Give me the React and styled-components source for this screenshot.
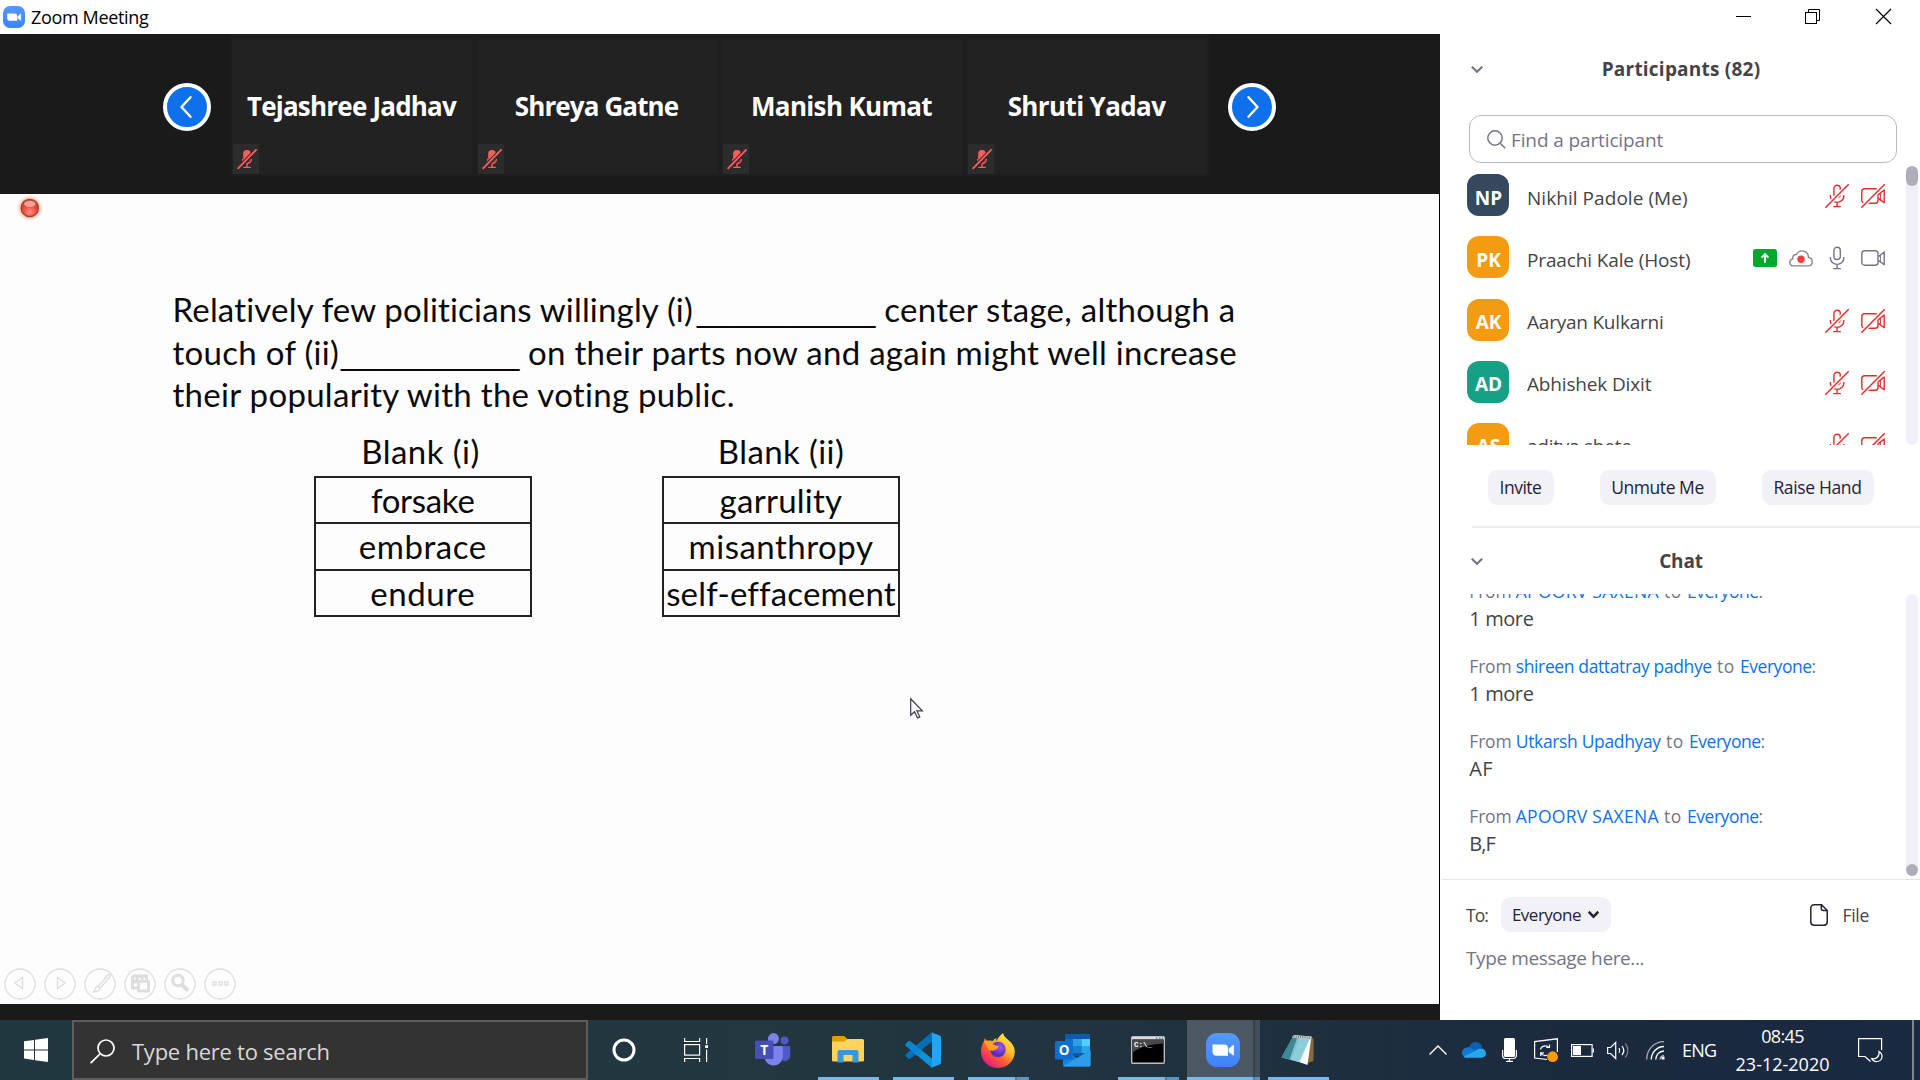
import React from "react";
import styled, { createGlobalStyle } from "styled-components";

const UI = `"Open Sans", "Noto Sans", sans-serif`;
const SLIDE = `Lato, "Open Sans", sans-serif`;

const GlobalStyle = createGlobalStyle`
  * { box-sizing: border-box; }
  html, body { margin: 0; padding: 0; overflow: hidden; }
  body { font-family: ${UI}; background: #fff; }
  svg { display: block; flex: none; overflow: visible; }
`;

const Screen = styled.div`
  width: 1920px;
  height: 1080px;
  display: flex;
  flex-direction: column;
  overflow: hidden;
`;

const Label = styled.span`
  white-space: pre;
  font-size: ${(p) => p.$size || 18}px;
  font-weight: ${(p) => (p.$bold ? 700 : 400)};
  letter-spacing: ${(p) => p.$ls || 0}px;
  color: ${(p) => p.$color || "#444446"};
`;

/* ---------- title bar ---------- */

const TitleBar = styled.header`
  height: 34px;
  flex: none;
  display: flex;
  align-items: flex-start;
  padding: 0 29px 0 3px;
  background: #fff;
`;
const TitleIcon = styled.div`
  padding-top: 6px;
  margin-right: 6px;
`;
const Title = styled(Label)`
  line-height: 34px;
  flex: 1;
`;
const WindowButtons = styled.div`
  display: grid;
  grid-template-columns: 69px 71px 15px;
  padding-top: 9px;
`;

/* ---------- meeting ---------- */

const Main = styled.main`
  height: 986px;
  flex: none;
  display: flex;
`;
const Stage = styled.section`
  width: 1440px;
  flex: none;
  display: flex;
  flex-direction: column;
  background: #1a1a1a;
`;
const Gallery = styled.div`
  height: 160px;
  flex: none;
  display: flex;
  align-items: flex-start;
  padding-left: 163px;
`;
const PageButton = styled.button`
  width: 48px;
  height: 48px;
  margin: 49px 0 0;
  padding: 0;
  border: 4px solid #fff;
  border-radius: 50%;
  background: #0e71eb;
  display: flex;
  align-items: center;
  justify-content: center;
`;
const Tiles = styled.div`
  margin: 0 19px 0 19px;
  padding: 5px 2px 2px 2px;
  display: flex;
  gap: 5px;
  background: #1c1e1f;
`;
const Tile = styled.div`
  width: 240px;
  height: 135px;
  background: #222;
  display: flex;
  flex-direction: column;
`;
const TileName = styled(Label)`
  height: 105px;
  padding: 30px 1px 0 0;
  line-height: 74px;
  text-align: center;
`;
const TileBadge = styled.div`
  width: 26px;
  height: 30px;
  margin-left: 1px;
  padding-left: 1px;
  background: #2c2c2c;
  display: flex;
  align-items: center;
  justify-content: center;
`;

/* ---------- slide ---------- */

const Slide = styled.article`
  height: 810px;
  flex: none;
  position: relative;
  display: flex;
  flex-direction: column;
  background: #fdfdfd;
  border-right: 1px solid #000;
  font-family: ${SLIDE};
`;
const Recording = styled.div`
  height: 28px;
  flex: none;
  padding-left: 14px;
`;
const Question = styled.div`
  margin: 66px 0 0 172.5px;
  height: 128.4px;
`;
const QuestionLine = styled.div`
  display: flex;
  height: 42.6px;
  line-height: 42.8px;
`;
const Phrase = styled(Label)`
  width: ${(p) => (p.$w ? `${p.$w}px` : "auto")};
  flex: none;
`;
const Blank = styled(Phrase)`
  font-family: "Liberation Sans", sans-serif;
  line-height: 46px;
`;
const Choices = styled.div`
  display: flex;
  gap: 130.5px;
  margin: 13.5px 0 0 314px;
`;
const Choice = styled.div`
  width: ${(p) => p.$w}px;
  display: flex;
  flex-direction: column;
  align-items: center;
`;
const ChoiceHead = styled(Label)`
  height: 46px;
  line-height: 43px;
  padding-right: ${(p) => p.$shift || 0}px;
`;
const ChoiceTable = styled.div`
  width: 100%;
  border: solid #222;
  border-width: 0 2px 2px;
`;
const ChoiceRow = styled.div`
  height: 46.5px;
  border-top: 2px solid #222;
  line-height: 45.6px;
  text-align: center;
`;
const SlideControls = styled.div`
  margin: auto 0 4px 5px;
  display: flex;
  gap: 10px;
`;
const Cursor = styled.div`
  position: absolute;
  left: 910px;
  top: 504px;
`;

/* ---------- side panel ---------- */

const Panel = styled.aside`
  width: 480px;
  flex: none;
  display: flex;
  flex-direction: column;
  background: #fff;
`;
const PanelHeader = styled.div`
  height: ${(p) => p.$h}px;
  flex: none;
  display: grid;
  grid-template-columns: 58px 1fr 57px;
  align-items: center;
  padding-left: 1px;
  text-align: center;
  svg { margin-left: 30px; }
`;
const SearchField = styled.div`
  height: 48px;
  width: 428px;
  flex: none;
  margin: 11px 0 0 29px;
  padding-left: 17px;
  display: flex;
  align-items: center;
  gap: 5px;
  border: 1.5px solid #b9b7cc;
  border-radius: 12px;
`;
const Placeholder = styled(Label)`
  padding-top: 2px;
`;
const Scroller = styled.div`
  height: ${(p) => p.$h}px;
  flex: none;
  display: flex;
  overflow: hidden;
  padding-right: 2px;
`;
const People = styled.div`
  flex: 1;
  padding: 1.3px 21px 0 27px;
`;
const Track = styled.div`
  width: 12px;
  margin-top: ${(p) => p.$top || 0}px;
  border-radius: 6px;
  background: #f1f0f6;
  display: flex;
  flex-direction: column;
  justify-content: ${(p) => (p.$end ? "flex-end" : "flex-start")};
`;
const Thumb = styled.div`
  height: ${(p) => p.$h}px;
  border-radius: 6px;
  background: #aeaeb8;
`;
const Person = styled.div`
  height: 62.1px;
  display: flex;
  align-items: center;
`;
const Avatar = styled.div`
  width: 42px;
  height: 42px;
  flex: none;
  padding: 5px 0 0 1px;
  border-radius: 12px;
  background: ${(p) => p.$bg};
  display: flex;
  align-items: center;
  justify-content: center;
`;
const PersonName = styled(Label)`
  flex: 1;
  padding: 4.7px 0 0 18px;
`;
const PersonIcons = styled.div`
  display: flex;
  align-items: center;
  gap: 12px;
  padding-top: 2px;
`;
const PanelActions = styled.div`
  display: flex;
  gap: 46px;
  padding: 25px 0 21px 48px;
`;
const Pill = styled.button`
  width: ${(p) => p.$w}px;
  height: 35px;
  flex: none;
  padding: 0 1px 1px 0;
  border: 0;
  border-radius: 9px;
  background: #f2f1f7;
  font-family: inherit;
  display: flex;
  align-items: center;
  justify-content: center;
  gap: 7px;
`;
const Divider = styled.div`
  height: ${(p) => p.$h}px;
  flex: none;
  margin-left: ${(p) => p.$left}px;
  background: ${(p) => p.$color};
`;
const Messages = styled.div`
  flex: 1;
  display: flex;
  flex-direction: column;
  justify-content: flex-end;
  gap: 21px;
  padding: 0 0 19.5px 29.3px;
`;
const Message = styled.div`
  flex: none;
  display: flex;
  flex-direction: column;
  line-height: 27px;
`;
const MessageMeta = styled.div`
  height: 27px;
  white-space: pre;
`;
const Composer = styled.div`
  flex: 1;
  padding: 17px 51px 0 26px;
`;
const ComposerRow = styled.div`
  display: flex;
  align-items: center;
`;
const Recipient = styled(Label)`
  width: 35px;
`;
const FileButton = styled.div`
  margin-left: auto;
  display: flex;
  align-items: center;
  gap: 14.5px;
`;
const MessageInput = styled.div`
  margin-top: 6px;
  line-height: 40px;
`;

/* ---------- taskbar ---------- */

const Taskbar = styled.footer`
  height: 60px;
  flex: none;
  display: flex;
  background: linear-gradient(90deg, #21373f 0%, #22373f 40%, #223440 55%, #1f303e 66%, #1c2a3f 80%, #1b2941 100%);
`;
const Start = styled.div`
  width: 72px;
  flex: none;
  display: flex;
  align-items: center;
  justify-content: center;
`;
const TaskSearch = styled.div`
  width: 516px;
  flex: none;
  border: 2px solid #5d5d5d;
  background: #333;
  display: flex;
  align-items: center;
  gap: 17px;
  padding: 2px 0 0 16px;
`;
const TaskItem = styled.div`
  width: ${(p) => p.$w}px;
  height: 60px;
  flex: none;
  padding-right: ${(p) => p.$right || 0}px;
  display: flex;
  align-items: center;
  justify-content: center;
`;
const TaskButton = styled.div`
  position: relative;
  width: ${(p) => (p.$active ? 73 : 61)}px;
  height: 60px;
  flex: none;
  margin: 0 ${(p) => (p.$active || p.$snug ? 8 : 14)}px 0 0;
  padding-right: 2px;
  display: flex;
  align-items: center;
  justify-content: center;
  background: ${(p) =>
    p.$active ? "linear-gradient(90deg,#4b5863 0 66px,#35434e 66px 68px,#414e59 68px)" : "none"};
`;
const RunningBar = styled.div`
  position: absolute;
  left: 0;
  right: 0;
  bottom: 0;
  height: 3px;
  background: ${(p) =>
    p.$split
      ? `linear-gradient(90deg,#76b9ed 0 ${p.$split}px,#4e7c9f ${p.$split}px ${p.$split + 2}px,#5a94c0 ${p.$split + 2}px)`
      : "#76b9ed"};
`;
const Tray = styled.div`
  margin-left: auto;
  display: flex;
  align-items: center;
  height: 60px;
`;
const TrayIcon = styled.div`
  width: ${(p) => p.$w}px;
  padding-left: ${(p) => p.$left || 0}px;
  flex: none;
  display: flex;
`;
const Language = styled(Label)`
  width: 54px;
  flex: none;
`;
const Clock = styled.div`
  width: 93px;
  flex: none;
  height: 60px;
  padding-top: 2px;
  display: flex;
  flex-direction: column;
  align-items: center;
  line-height: 28px;
`;
const ShowDesktop = styled.div`
  width: 8px;
  height: 60px;
  border-left: 2px solid #7d8691;
`;

/* ---------- drawings ---------- */

const ZoomLogo = ({ size }) => (
  <svg width={size} height={size} viewBox="0 0 34 34">
    <defs>
      <linearGradient id="zg" x1="0" y1="0" x2="0" y2="1">
        <stop offset="0" stopColor="#5499fb" />
        <stop offset="1" stopColor="#3d82fa" />
      </linearGradient>
    </defs>
    <rect width="34" height="34" rx="11" fill="url(#zg)" />
    <path d="M6.5 11.5h11.5a4 4 0 0 1 4 4v7.2h-11.5a4 4 0 0 1-4-4z" fill="#fff" />
    <path d="M23 15.7l4.6-3.6v10.2L23 19z" fill="#fff" stroke="#fff" strokeWidth=".6" strokeLinejoin="round" />
  </svg>
);

const Chevron = ({ color = "#747487", w = 12, sw = 2.2 }) => (
  <svg width={w} height="7" viewBox="0 0 12 7" preserveAspectRatio="none">
    <path d="M.8 .8L6 5.8 11.2 .8" fill="none" stroke={color} strokeWidth={sw} />
  </svg>
);

const RED = "#e02e2e";
const GREY = "#747487";

const MicShape = ({ color }) => (
  <g fill="none" stroke={color} strokeWidth="1.4">
    <rect x="8.9" y="1.2" width="6.4" height="12.3" rx="3.2" />
    <path d="M5.4 11v1.2a6.7 6.2 0 0 0 13.4 0V11M12.1 18.6v3.4M8.3 22.6h7.6" />
  </g>
);
const CamShape = ({ color }) => (
  <g fill="none" stroke={color} strokeWidth="1.4" strokeLinejoin="round">
    <rect x=".8" y="4.8" width="16.2" height="14.4" rx="2.8" />
    <path d="M17.4 10.6l5.8-4.6v12.8l-5.8-4.4" />
    <path d="M19.4 9.2v6.4" strokeWidth="1" />
  </g>
);
const Slash = () => (
  <g>
    <path d="M0 24L24 0" stroke="#fff" strokeWidth="4.2" />
    <path d="M.3 23.7L23.7 .3" stroke={RED} strokeWidth="1.5" />
  </g>
);
const Mic = ({ muted }) => (
  <svg width="24" height="24" viewBox="0 0 24 24">
    <MicShape color={muted ? RED : GREY} />
    {muted && <Slash />}
  </svg>
);
const Cam = ({ muted }) => (
  <svg width="24" height="24" viewBox="0 0 24 24">
    <CamShape color={muted ? RED : GREY} />
    {muted && <Slash />}
  </svg>
);
const ShareIcon = () => (
  <svg width="24" height="18" viewBox="0 0 24 18">
    <rect width="24" height="18" rx="2.5" fill="#04a82e" />
    <path d="M12 13.8V6M8.6 8.6L12 5.2l3.4 3.4" fill="none" stroke="#fff" strokeWidth="1.9" />
  </svg>
);
const CloudRecord = () => (
  <svg width="24" height="17" viewBox="0 0 24 17">
    <path
      d="M4.6 15.9C2.2 15.9.8 14.4.8 12.4c0-1.9 1.2-3.1 3-3.5C3.4 5.8 5 4.4 7.4 4.5 8.6 2.2 10.7.9 13 .9c3.8 0 6.5 2.7 6.4 6.4 2.6.6 3.8 2.4 3.8 4.4 0 2.6-1.5 4.2-4.2 4.2z"
      fill="none" stroke="#85858f" strokeWidth="1.4"
    />
    <circle cx="12" cy="9.2" r="3.7" fill="#fb3a3a" />
  </svg>
);
const TileMute = () => (
  <svg width="20" height="20" viewBox="0 0 20 20">
    <g fill="#ff5c5c">
      <rect x="6.2" y="1" width="7.6" height="11.6" rx="3.6" />
      <path d="M5 9.8h1.2a3.8 3.8 0 0 0 7.6 0H15a5 5 0 0 1-4.3 5.4v2.5h3.1V19H6.2v-1.3h3.1v-2.5A5 5 0 0 1 5 9.8z" />
    </g>
    <path d="M.6 20.4L20 .6" stroke="#2c2c2c" strokeWidth="4.4" />
    <path d="M.6 19.8L19.6 .4" stroke="#ff5c5c" strokeWidth="1.9" />
  </svg>
);

const RecordDot = () => (
  <svg width="32" height="28" viewBox="0 0 32 28">
    <defs>
      <radialGradient id="halo">
        <stop offset=".6" stopColor="#ff8a5c" stopOpacity=".9" />
        <stop offset="1" stopColor="#ffd9c8" stopOpacity="0" />
      </radialGradient>
      <radialGradient id="ball" cx=".5" cy=".75">
        <stop offset="0" stopColor="#ff9a8e" />
        <stop offset=".55" stopColor="#fb5a4c" />
        <stop offset="1" stopColor="#dc4238" />
      </radialGradient>
    </defs>
    <circle cx="15.8" cy="14" r="13.5" fill="url(#halo)" />
    <circle cx="15.8" cy="13.9" r="8.6" fill="url(#ball)" stroke="#97483f" strokeWidth="1.3" />
    <ellipse cx="15.8" cy="9.8" rx="5.8" ry="3" fill="#ffd2cb" opacity=".65" />
  </svg>
);

const controlShapes = [
  <path d="M17.5 9.5v11L9.8 15z" />,
  <path d="M12.5 9.5v11l7.7-5.5z" />,
  <path d="M23 6.5L13 19M25 8.5L15 20.5M23 6.5c1.5-.9 2.8.5 2 2M13 18.2c-2 .2-2.7 1.6-3 3.6l-1.5 2c2.8-.2 5.5-.8 6.5-3.4z" />,
  <g>
    <path d="M7.5 8h14v5M7.5 8v12h5M12 8v5H7.5M17 8v4M7.5 14h4" strokeWidth="3" />
    <rect x="13.5" y="13.5" width="10" height="9.5" strokeWidth="2.8" />
  </g>,
  <g>
    <circle cx="13" cy="12.5" r="5.3" strokeWidth="3" />
    <path d="M17 17l6 5.5" strokeWidth="4" />
  </g>,
  <g>
    <rect x="8" y="14" width="3" height="3" />
    <rect x="14" y="14" width="3" height="3" />
    <rect x="20" y="14" width="3" height="3" />
  </g>,
];

const SlideControl = ({ children }) => (
  <svg width="30" height="32" viewBox="0 0 30 32" fill="none" stroke="#dfdcdf" strokeWidth="1.3">
    <circle cx="15" cy="16" r="15" />
    {children}
  </svg>
);

const WindowsLogo = () => (
  <svg width="24" height="24" viewBox="0 0 24 24" fill="#fff">
    <path d="M0 3.3l10-1.4v9.5H0zM11 1.7L24 0v11.4H11zM0 12.4h10v9.6L0 20.6zM11 12.4h13V24l-13-1.8z" />
  </svg>
);
const SearchGlyph = () => (
  <svg width="25" height="25" viewBox="0 0 25 25" fill="none" stroke="#fff" strokeWidth="1.7">
    <circle cx="16" cy="9" r="8" />
    <path d="M10.3 14.6L.6 24.2" />
  </svg>
);
const TaskView = () => (
  <svg width="25" height="24" viewBox="0 0 25 24" fill="none" stroke="#fff" strokeWidth="1.2">
    <path d="M.6 0v3.5h15V0M.6 24v-3.5h15V24" />
    <rect x=".6" y="6.6" width="15" height="10.5" />
    <path d="M22.6 0v6M22.6 11.5V24" />
    <rect x="21.2" y="7.2" width="2.8" height="2.8" fill="#fff" stroke="none" />
  </svg>
);
const Teams = () => (
  <svg width="36" height="34" viewBox="0 0 36 34">
    <circle cx="29.5" cy="7.5" r="4" fill="#5059c9" />
    <circle cx="18.5" cy="5.6" r="5.5" fill="#7b83eb" />
    <path d="M25 13h9a1.2 1.2 0 0 1 1.2 1.2v8.3c0 3.3-2.5 5.5-5.4 5.5-2 0-4-1-4.8-3z" fill="#5059c9" />
    <path d="M9.5 13h17a1.3 1.3 0 0 1 1.3 1.3V23c0 5.5-4 9.5-9.2 9.5S9.5 28.5 9.5 23z" fill="#7b83eb" />
    <rect x="0" y="7.5" width="18.5" height="18.5" rx="1.5" fill="#464eb8" />
    <text x="9.2" y="22" fontFamily="Open Sans, sans-serif" fontWeight="700" fontSize="14" fill="#fff" textAnchor="middle">T</text>
  </svg>
);
const Explorer = () => (
  <svg width="32" height="28" viewBox="0 0 32 28">
    <path d="M0 1.5A1.5 1.5 0 0 1 1.5 0H12l3 2.5V6H0z" fill="#e0a000" />
    <path d="M0 5.5h12.5L15.5 3H30.5A1.5 1.5 0 0 1 32 4.5V24a1.5 1.5 0 0 1-1.5 1.5h-29A1.5 1.5 0 0 1 0 24z" fill="#ffd35c" />
    <path d="M5.5 25.5V16a2 2 0 0 1 2-2h17a2 2 0 0 1 2 2v10.5h-6V19h-9v7.5h-6z" fill="#3a96dd" />
  </svg>
);
const VSCode = () => (
  <svg width="36" height="36" viewBox="0 0 36 36">
    <path d="M1 11.7L3.2 9.5a1.6 1.6 0 0 1 2.2 0L27 26.5V36L.9 13.8a1.5 1.5 0 0 1 .1-2.1z" fill="#1191d8" />
    <path d="M1 24.3l2.2 2.2a1.6 1.6 0 0 0 2.2 0L27 9.5V0L.9 22.2a1.5 1.5 0 0 0 .1 2.1z" fill="#0070b8" />
    <path d="M1 11.7L3.2 9.5a1.6 1.6 0 0 1 2.2 0L18 19.5l-6 4.5L.9 13.8a1.5 1.5 0 0 1 .1-2.1z" fill="#0a85d1" />
    <path d="M25.5 0L34.7 3.5A2 2 0 0 1 36 5.3v25.4a2 2 0 0 1-1.3 1.8L25.5 36c1 0 1.5-.6 1.5-1.5v-33c0-.9-.5-1.5-1.5-1.5z" fill="#25a4f0" />
  </svg>
);
const Firefox = () => (
  <svg width="34" height="35" viewBox="0 0 34 35">
    <defs>
      <linearGradient id="ff1" x1=".85" y1=".1" x2=".2" y2=".95">
        <stop offset="0" stopColor="#fff04a" />
        <stop offset=".35" stopColor="#ffb52a" />
        <stop offset=".62" stopColor="#ff5b33" />
        <stop offset="1" stopColor="#e8177e" />
      </linearGradient>
      <radialGradient id="ff2" cx=".65" cy=".35">
        <stop offset="0" stopColor="#9a5cf5" />
        <stop offset="1" stopColor="#5a2fb8" />
      </radialGradient>
    </defs>
    <path d="M22 0c.6 3.2 3 5 5.5 7.2 3.8 3.3 6.3 6.8 6.3 11.4C33.8 27.8 26.5 35 17 35 7.5 35 0 28 0 18.5 0 14.5 1 11 3 8.2c.1-1.3.5-2.3 1-3 .5 1.2 1.3 2.1 2.3 2.7 2-.7 4-.6 5.7 0 .8-1.6 2.2-2.6 3.7-3-.6 1-.8 2-.4 3.2C16.5 5.5 19 2.8 22 0z" fill="url(#ff1)" />
    <path d="M10 13.5c2-4 6-5.5 9.5-4.2 4 1.3 5.5 4.7 5 8.2-.6 4-3.7 6.8-7.5 6.8-4.5 0-7.5-3-7.5-7 1.5.8 3.2.8 4.5.2l3.5-2.5c-2.5.5-5.5-.5-7.5-1.5z" fill="url(#ff2)" />
    <path d="M3 8.5c3.5-1.5 7.5-.5 9 2.5 1.5 1.3 3.5 1.7 5.5 2.2.2 1.8-2.5 2.6-4.5 3.3-1.8.8-3.5 1-5 .5z" fill="#ffa02a" />
  </svg>
);
const Outlook = () => (
  <svg width="36" height="33" viewBox="0 0 36 33">
    <rect x="10" y="0" width="25" height="22" rx="1.5" fill="#0a5ab0" />
    <rect x="10" y="5" width="9" height="14" fill="#0f6fc0" />
    <rect x="18" y="5" width="8.5" height="7" fill="#2aa0e4" />
    <rect x="26.5" y="5" width="8.5" height="7" fill="#50d0fa" />
    <rect x="18" y="12" width="8.5" height="7" fill="#1580d0" />
    <rect x="26.5" y="12" width="8.5" height="7" fill="#2aa4ea" />
    <path d="M8 15.5L22 24 35.5 16v15a1.5 1.5 0 0 1-1.5 1.5H9.5A1.5 1.5 0 0 1 8 31z" fill="#1784dc" />
    <path d="M35.5 16L8.5 32c.3.3.6.5 1 .5H34a1.5 1.5 0 0 0 1.5-1.5z" fill="#2b9deb" />
    <rect x="0" y="7" width="18" height="18.5" rx="1.5" fill="#0f6fd0" />
    <text x="9" y="21.3" fontFamily="Open Sans, sans-serif" fontWeight="700" fontSize="13.5" fill="#fff" textAnchor="middle">O</text>
  </svg>
);
const Terminal = () => (
  <svg width="34" height="28" viewBox="0 0 34 28">
    <rect x=".7" y=".7" width="32.6" height="26.6" rx="1" fill="#000" stroke="#b9bcbe" strokeWidth="1.4" />
    <rect x="1" y="1" width="32" height="2.5" fill="#d9dcde" />
    <path d="M25 2.2h1.5M28 2.2h1.5M30.8 2.2h1.2" stroke="#5577a5" strokeWidth="1.3" />
    <path d="M1.5 3.5h31v4C22 8 9 10 1.5 17z" fill="#47494b" />
    <text x="3" y="10.5" fontFamily="Liberation Mono, monospace" fontWeight="700" fontSize="7.5" fill="#fff">C:\_</text>
  </svg>
);
const Notepad = () => (
  <svg width="34" height="32" viewBox="0 0 34 32">
    <path d="M29 3l3.5 1.5V27L27 29z" fill="#8a6a3a" />
    <path d="M13 1l17.5 1.5L26.5 31 15 27z" fill="#e6ebee" />
    <path d="M27 8l2.5-4-3 26-7-1.5z" fill="#fafbfb" />
    <path d="M11.5 3.5L28.5 5 18 28 .5 23.5z" fill="#79c0cd" />
    <path d="M11.5 3.5L16 4 8.500 25.5.5 23.5z" fill="#3f8797" />
    <path d="M18 4.5L28.5 5 18 28l-8-2z" fill="#9ad7e0" opacity=".6" />
    <path d="M12 1.5l18.5 1.3-.5 2.4L11 3.8z" fill="#cfd3d5" />
    <path d="M12.5 2.5l17.5 1.3" stroke="#676d70" strokeWidth="2" strokeDasharray="1 1.2" />
  </svg>
);

/* ---------- data ---------- */

const tiles = [
  { name: "Tejashree Jadhav", ls: -0.79 },
  { name: "Shreya Gatne", ls: -0.88 },
  { name: "Manish Kumat", ls: -0.66 },
  { name: "Shruti Yadav", ls: -0.62 },
];
const people = [
  { initials: "NP", color: "#34495e", name: "Nikhil Padole (Me)", ls: 0.05 },
  { initials: "PK", color: "#f39c12", name: "Praachi Kale (Host)", ls: -0.13, host: true },
  { initials: "AK", color: "#f39c12", name: "Aaryan Kulkarni", ls: -0.22 },
  { initials: "AD", color: "#16a085", name: "Abhishek Dixit", ls: -0.16 },
  { initials: "AS", color: "#f39c12", name: "aditya shete", ls: -0.25 },
];
const messages = [
  { from: "APOORV SAXENA", ls: 0.28, text: "1 more", tls: -0.4 },
  { from: "shireen dattatray padhye", ls: -0.38, text: "1 more", tls: -0.4 },
  { from: "Utkarsh Upadhyay", ls: -0.35, text: "AF", tls: 0.3 },
  { from: "APOORV SAXENA", ls: 0.28, text: "B,F", tls: -0.9 },
];
const choices = [
  { head: "Blank (i)", w: 217.5, ls: 0.45, shift: 4.5, rows: [["forsake", -0.28], ["embrace", 0.56], ["endure", 0.59]] },
  { head: "Blank (ii)", w: 238, ls: 0.4, shift: 0, rows: [["garrulity", 0.25], ["misanthropy", 0.5], ["self-effacement", 0.18]] },
];

const BLUE = "#0e71eb";
const INK = "#0a0a0a";

export default function App() {
  return (
    <Screen>
      <GlobalStyle />
      <TitleBar>
        <TitleIcon><ZoomLogo size={22} /></TitleIcon>
        <Title $size={18} $ls={-0.34} $color="#000">Zoom Meeting</Title>
        <WindowButtons>
          <svg width="15" height="15"><path d="M0 7.5h15" stroke="#000" /></svg>
          <svg width="15" height="15" fill="none" stroke="#000">
            <rect x=".5" y="3.5" width="11" height="11" />
            <path d="M3.5 3.5v-3h11v11h-3" />
          </svg>
          <svg width="15" height="15"><path d="M0 0l15 15M15 0L0 15" stroke="#000" strokeWidth="1.2" /></svg>
        </WindowButtons>
      </TitleBar>

      <Main>
        <Stage>
          <Gallery>
            <PageButton>
              <svg width="12" height="22" viewBox="0 0 12 22"><path d="M9.5 1.2L.5 11l9 9.8" fill="none" stroke="#fff" strokeWidth="2.4" strokeLinecap="round" strokeLinejoin="round" /></svg>
            </PageButton>
            <Tiles>
              {tiles.map((t) => (
                <Tile key={t.name}>
                  <TileName $size={26} $bold $ls={t.ls} $color="#fff">{t.name}</TileName>
                  <TileBadge><TileMute /></TileBadge>
                </Tile>
              ))}
            </Tiles>
            <PageButton>
              <svg width="12" height="22" viewBox="0 0 12 22"><path d="M2.5 1.2l9 9.8-9 9.8" fill="none" stroke="#fff" strokeWidth="2.4" strokeLinecap="round" strokeLinejoin="round" /></svg>
            </PageButton>
          </Gallery>

          <Slide>
            <Recording><RecordDot /></Recording>
            <Question>
              <QuestionLine>
                <Phrase $size={33} $ls={0.18} $color={INK} $w={524.5}>Relatively few politicians willingly (i)</Phrase>
                <Blank $size={32.1} $color={INK} $w={187.3}>__________</Blank>
                <Phrase $size={33} $ls={0.26} $color={INK}>center stage, although a</Phrase>
              </QuestionLine>
              <QuestionLine>
                <Phrase $size={33} $ls={0.3} $color={INK} $w={168.5}>touch of (ii)</Phrase>
                <Blank $size={32.1} $color={INK} $w={187}>__________</Blank>
                <Phrase $size={33} $ls={0.28} $color={INK}>on their parts now and again might well increase</Phrase>
              </QuestionLine>
              <QuestionLine>
                <Phrase $size={33} $ls={0.29} $color={INK}>their popularity with the voting public.</Phrase>
              </QuestionLine>
            </Question>
            <Choices>
              {choices.map((c) => (
                <Choice key={c.head} $w={c.w}>
                  <ChoiceHead $size={33} $ls={c.ls} $shift={c.shift} $color={INK}>{c.head}</ChoiceHead>
                  <ChoiceTable>
                    {c.rows.map(([word, ls]) => (
                      <ChoiceRow key={word}><Label $size={33} $ls={ls} $color={INK}>{word}</Label></ChoiceRow>
                    ))}
                  </ChoiceTable>
                </Choice>
              ))}
            </Choices>
            <SlideControls>
              {controlShapes.map((shape, i) => <SlideControl key={i}>{shape}</SlideControl>)}
            </SlideControls>
            <Cursor>
              <svg width="13" height="21" viewBox="0 0 13 21">
                <path d="M.7 .8v16.5l3.8-3.6 3 6.2 2.3-1-2.9-6h5.4z" fill="#fff" stroke="#3a3a4c" strokeWidth="1.2" />
              </svg>
            </Cursor>
          </Slide>
        </Stage>

        <Panel>
          <PanelHeader $h={70}>
            <Chevron />
            <Label $size={19} $bold $ls={0.22}>Participants (82)</Label>
          </PanelHeader>
          <SearchField>
            <svg width="19" height="19" viewBox="0 0 19 19" fill="none" stroke="#747487" strokeWidth="1.5">
              <circle cx="8" cy="8" r="7.2" />
              <path d="M13.2 13.2l5 5" />
            </svg>
            <Placeholder $size={19} $ls={-0.12} $color="#747487">Find a participant</Placeholder>
          </SearchField>
          <Scroller $h={282}>
            <People>
              {people.map((p) => (
                <Person key={p.name}>
                  <Avatar $bg={p.color}><Label $size={19} $bold $color="#fff">{p.initials}</Label></Avatar>
                  <PersonName $size={19} $ls={p.ls}>{p.name}</PersonName>
                  <PersonIcons>
                    {p.host && <ShareIcon />}
                    {p.host && <CloudRecord />}
                    <Mic muted={!p.host} />
                    <Cam muted={!p.host} />
                  </PersonIcons>
                </Person>
              ))}
            </People>
            <Track $top={3}><Thumb $h={20} /></Track>
          </Scroller>
          <PanelActions>
            <Pill $w={66}><Label $size={17.5} $ls={-0.5} $color="#232333">Invite</Label></Pill>
            <Pill $w={116}><Label $size={17.5} $ls={-0.45} $color="#232333">Unmute Me</Label></Pill>
            <Pill $w={112}><Label $size={17.5} $ls={-0.35} $color="#232333">Raise Hand</Label></Pill>
          </PanelActions>
          <Divider $h={2} $left={32} $color="#ededef" />
          <PanelHeader $h={66}>
            <Chevron />
            <Label $size={19} $bold $ls={-0.15}>Chat</Label>
          </PanelHeader>
          <Scroller $h={282}>
            <Messages>
              {messages.map((m, i) => (
                <Message key={i}>
                  <MessageMeta>
                    <Label $size={17.5} $ls={-0.2} $color="#747487">From </Label>
                    <Label $size={17.5} $ls={m.ls} $color={BLUE}>{m.from}</Label>
                    <Label $size={17.5} $ls={0.6} $color="#747487"> to </Label>
                    <Label $size={17.5} $ls={-0.47} $color={BLUE}>Everyone</Label>
                    <Label $size={17.5} $color="#747487">:</Label>
                  </MessageMeta>
                  <Label $size={20} $ls={m.tls}>{m.text}</Label>
                </Message>
              ))}
            </Messages>
            <Track $end><Thumb $h={12} /></Track>
          </Scroller>
          <Divider $h={3} $left={0} $color="#fff" />
          <Divider $h={1} $left={2} $color="#e6e5f0" />
          <Composer>
            <ComposerRow>
              <Recipient $size={17.5} $ls={-0.9}>To:</Recipient>
              <Pill $w={110}>
                <Label $size={17} $ls={-0.5} $color="#232333">Everyone</Label>
                <Chevron color="#232333" w={11} sw={2.6} />
              </Pill>
              <FileButton>
                <svg width="18" height="22" viewBox="0 0 18 22" fill="none" stroke="#232333" strokeWidth="1.5">
                  <path d="M4 .8h7.5l5.7 5.7V18a3.2 3.2 0 0 1-3.2 3.2H4A3.2 3.2 0 0 1 .8 18V4A3.2 3.2 0 0 1 4 .8z" />
                  <path d="M11.3 .8v3.7a2 2 0 0 0 2 2h3.9" />
                </svg>
                <Label $size={17.5} $ls={-0.29}>File</Label>
              </FileButton>
            </ComposerRow>
            <MessageInput><Label $size={19} $ls={-0.38} $color="#747487">Type message here...</Label></MessageInput>
          </Composer>
        </Panel>
      </Main>

      <Taskbar>
        <Start><WindowsLogo /></Start>
        <TaskSearch>
          <SearchGlyph />
          <Label $size={22} $ls={-0.25} $color="#d8d8d8">Type here to search</Label>
        </TaskSearch>
        <TaskItem $w={72}>
          <svg width="24" height="24"><circle cx="12" cy="12" r="10" fill="none" stroke="#fff" strokeWidth="3" /></svg>
        </TaskItem>
        <TaskItem $w={72}><TaskView /></TaskItem>
        <TaskItem $w={86} $right={4}><Teams /></TaskItem>
        <TaskButton><Explorer /><RunningBar /></TaskButton>
        <TaskButton><VSCode /><RunningBar /></TaskButton>
        <TaskButton><Firefox /><RunningBar $split={47} /></TaskButton>
        <TaskButton><Outlook /></TaskButton>
        <TaskButton $snug><Terminal /><RunningBar $split={47} /></TaskButton>
        <TaskButton $active><ZoomLogo size={34} /><RunningBar $split={66} /></TaskButton>
        <TaskButton><Notepad /><RunningBar /></TaskButton>
        <Tray>
          <TrayIcon $w={33}>
            <svg width="18" height="10" viewBox="0 0 18 10"><path d="M.5 9.5L9 1l8.5 8.5" fill="none" stroke="#fff" strokeWidth="1.4" /></svg>
          </TrayIcon>
          <TrayIcon $w={40}>
            <svg width="24" height="16" viewBox="0 0 24 16">
              <path d="M7 5.5C8 2 10.5 0 13.5 0c3.5 0 6 2.3 6.8 5.3L14 10z" fill="#0a5fb8" />
              <path d="M4.5 15.5A4.6 4.6 0 0 1 0 10.8C0 8 2.5 5.5 6 5.3c2-.1 3.7.6 5 1.7l5 4-9 4.5z" fill="#1078d0" />
              <path d="M18.5 6.5c3.2-.2 5.5 2 5.5 4.8 0 2.5-1.8 4.4-4.3 4.4H4.5c-1.2 0-2.3-.5-3-1.3L14 8.5c1.2-1.2 2.8-1.9 4.5-2z" fill="#28a8ea" />
            </svg>
          </TrayIcon>
          <TrayIcon $w={32}>
            <svg width="15" height="24" viewBox="0 0 15 24" fill="none" stroke="#fff" strokeWidth="1.2">
              <rect x="2" y="0" width="11" height="19" rx="1.5" fill="#fff" stroke="none" />
              <path d="M.6 12v5.5a3 3 0 0 0 3 3h7.8a3 3 0 0 0 3-3V12M7.5 20.5v3M4 23.4h7" />
            </svg>
          </TrayIcon>
          <TrayIcon $w={37}>
            <svg width="25" height="24" viewBox="0 0 25 24" fill="none" stroke="#fff" strokeWidth="1.2">
              <path d="M13 21.5L.6 20V3.6L23.4 .8V14" />
              <path d="M6.5 11.5c.6-3.5 5.5-5 8.5-2M15.5 6.5v3h-3.2M6.7 18v-3.2h3.2M6.9 15c1.7 2.6 4.5 3 6.5 2" />
              <circle cx="18.6" cy="18.7" r="5.4" fill="#ff9a0d" stroke="none" />
            </svg>
          </TrayIcon>
          <TrayIcon $w={36}>
            <svg width="23" height="13" viewBox="0 0 23 13" fill="none" stroke="#fff" strokeWidth="1.2">
              <rect x=".6" y=".6" width="20.5" height="11.8" />
              <rect x="2" y="2" width="8" height="9" fill="#fff" stroke="none" />
              <path d="M22.3 4.5v4" strokeWidth="1.4" />
            </svg>
          </TrayIcon>
          <TrayIcon $w={39}>
            <svg width="23" height="19" viewBox="0 0 23 19" fill="none" stroke="#fff" strokeWidth="1.2">
              <path d="M.6 6.5h3L8.7 1.5v16L3.6 12.5h-3z" />
              <path d="M12 7.2c1 1.5 1 3.2 0 4.7M15 5c2.2 2.8 2.2 6.3 0 9" />
              <path d="M18.3 2.5c3.4 4.2 3.4 9.8 0 14" stroke="#7c8494" />
            </svg>
          </TrayIcon>
          <TrayIcon $w={36}>
            <svg width="19" height="19" viewBox="0 0 19 19" fill="none" stroke="#fff" strokeWidth="1.3">
              <path d="M.7 18.5C.7 8.5 8 .8 18 .7" stroke="#aab0bb" />
              <path d="M5.2 18.5C5.5 11.5 10.5 5.7 18 5.5M9.7 18.5c.2-4.5 3.3-8.3 8.3-8.5" />
              <path d="M14 18.5c.2-2.2 1.8-4 4-4.2" stroke="#aab0bb" />
              <rect x="15.5" y="15.5" width="3" height="3" fill="#fff" stroke="none" />
            </svg>
          </TrayIcon>
          <Language $size={18} $ls={-0.78} $color="#fff">ENG</Language>
          <Clock>
            <Label $size={18} $ls={-0.65} $color="#fff">08:45</Label>
            <Label $size={18} $ls={0} $color="#fff">23-12-2020</Label>
          </Clock>
          <TrayIcon $w={83} $left={29}>
            <svg width="25" height="24" viewBox="0 0 25 24" fill="none" stroke="#fff" strokeWidth="1.2">
              <path d="M12.5 23.5L7 18.5H.6V.6h23V12" />
              <path d="M21 13.5c4.5 2.5 4 9.5-2 10-2.5.2-4.3-1-5.2-2.8 4.5.8 8-2.3 7.2-7.2z" />
            </svg>
          </TrayIcon>
          <ShowDesktop />
        </Tray>
      </Taskbar>
    </Screen>
  );
}
